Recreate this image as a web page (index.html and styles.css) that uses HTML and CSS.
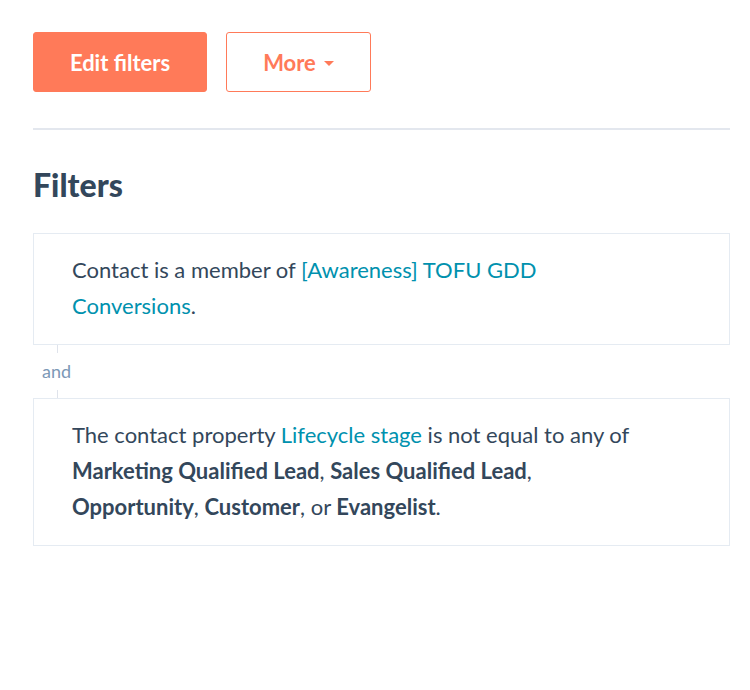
FILE: index.html
```
<!DOCTYPE html>
<html lang="en">
<head>
    <meta charset="UTF-8">
    <title>Filters</title>
    <link rel="stylesheet" href="styles.css">
</head>
<body>
    <div class="panel">
        <div class="actions">
            <button class="btn btn-primary">Edit filters</button>
            <button class="btn btn-secondary">More <span class="caret"></span></button>
        </div>
        <hr class="divider">
        <h2 class="title">Filters</h2>
        <div class="filter-card">
            <p class="filter-text">Contact is a member of <a href="#" class="link">[Awareness] TOFU GDD Conversions</a>.</p>
        </div>
        <div class="joiner">
            <span class="joiner-line"></span>
            <span class="joiner-label">and</span>
            <span class="joiner-line"></span>
        </div>
        <div class="filter-card">
            <p class="filter-text">The contact property <a href="#" class="link">Lifecycle stage</a> is not equal to any of <b>Marketing Qualified Lead</b>, <b>Sales Qualified Lead</b>, <b>Opportunity</b>, <b>Customer</b>, or <b>Evangelist</b>.</p>
        </div>
    </div>
</body>
</html>
```

FILE: styles.css
```
body {
    margin: 0;
    background-color: #fff;
    color: #33475b;
    font-family: 'Lato', 'Open Sans', sans-serif;
}
.panel {
    width: 697px;
    padding: 32px 0 0 33px;
}
.actions {
    display: flex;
    gap: 19px;
}
.btn {
    height: 60px;
    border-radius: 3px;
    font-family: inherit;
    font-size: 22px;
    font-weight: 700;
    cursor: pointer;
    display: flex;
    align-items: center;
    justify-content: center;
}
.btn-primary {
    width: 174px;
    background-color: #ff7a59;
    border: 1px solid #ff7a59;
    color: #fff;
}
.btn-secondary {
    width: 145px;
    background-color: #fff;
    border: 1px solid #ff7a59;
    color: #ff7a59;
    gap: 8px;
}
.caret {
    width: 0;
    height: 0;
    border-left: 5px solid transparent;
    border-right: 5px solid transparent;
    border-top: 5px solid #ff7a59;
    margin-top: 2px;
}
.divider {
    border: none;
    border-top: 2px solid #e3e7ee;
    margin: 36px 0 0;
}
.title {
    font-size: 32px;
    font-weight: 900;
    margin: 37px 0 0;
    line-height: 36px;
}
.filter-card {
    border: 1px solid #e5ebf2;
    padding: 18px 38px 20px;
}
.title + .filter-card {
    margin-top: 30px;
}
.filter-text {
    margin: 0;
    max-width: 572px;
    font-size: 22px;
    line-height: 36px;
}
.filter-text b {
    font-weight: 700;
}
.link {
    color: #0091ae;
    text-decoration: none;
}
.joiner {
    display: flex;
    flex-direction: column;
    align-items: flex-start;
    padding-left: 9px;
}
.joiner-line {
    width: 1px;
    height: 8px;
    margin-left: 15px;
    background-color: #dfe3eb;
}
.joiner-label {
    font-size: 18px;
    line-height: 37px;
    color: #7c98b6;
}
```
